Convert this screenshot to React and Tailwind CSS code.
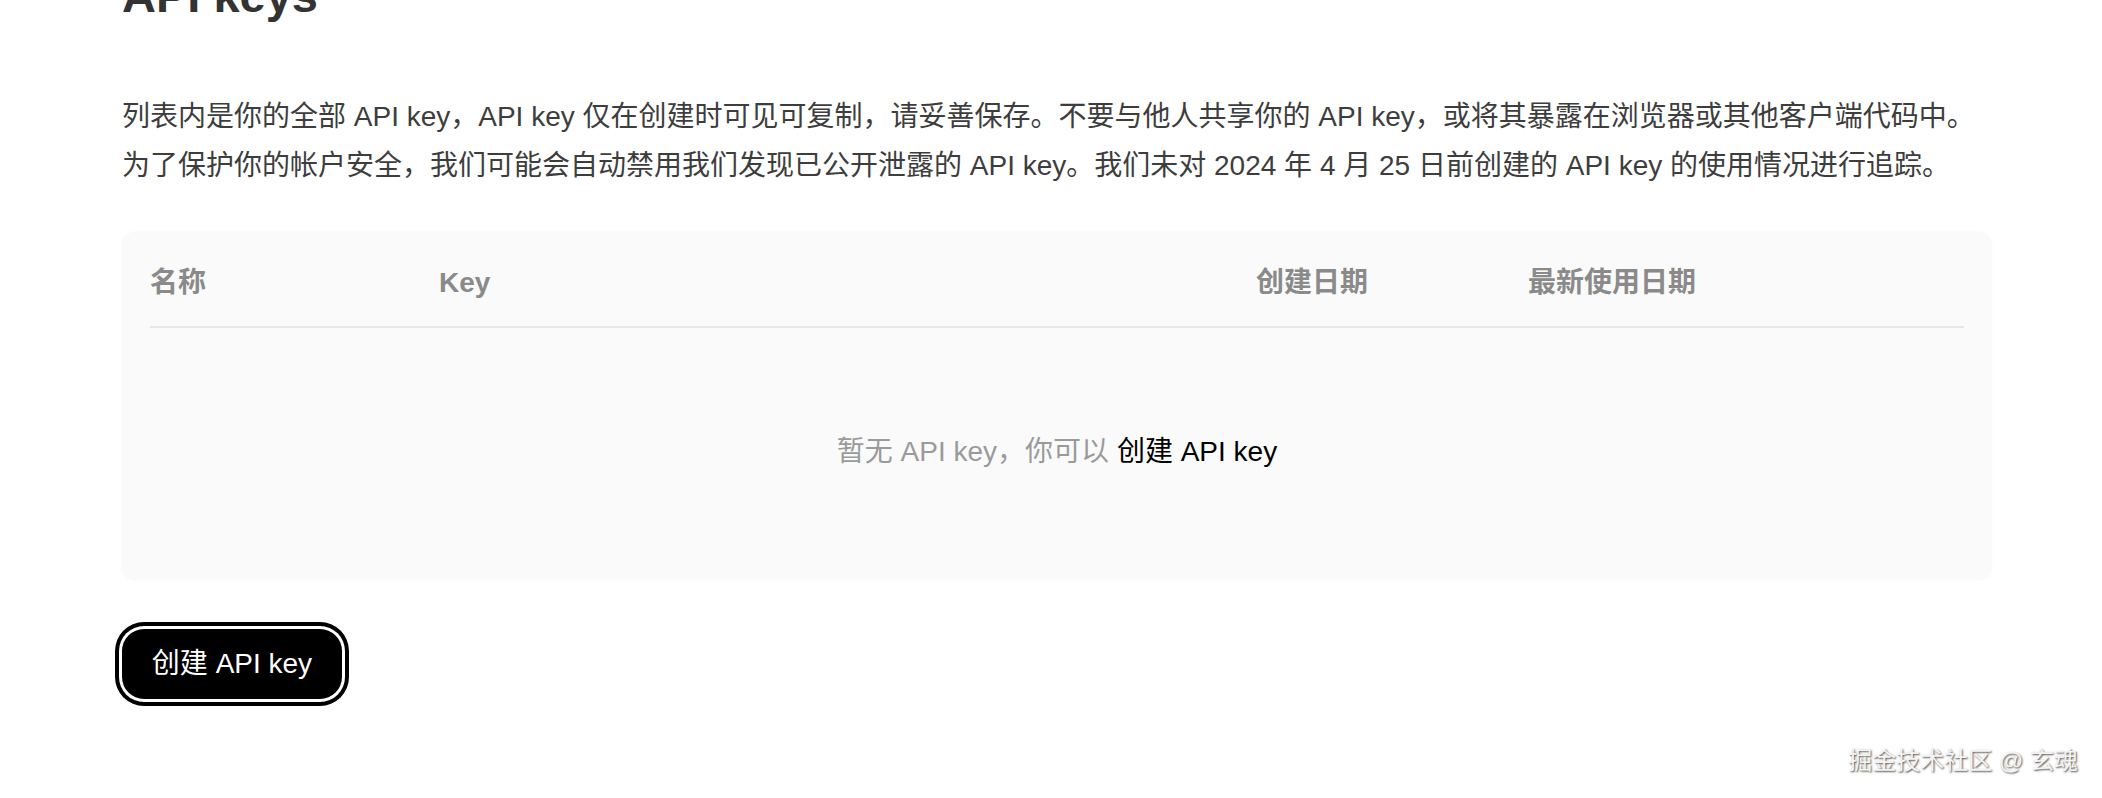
import React from "react";

const FONT = "font-['Liberation_Sans','Noto_Sans_CJK_SC',sans-serif]";

export default function App() {
  return (
    <div className={`relative h-[798px] w-full overflow-hidden bg-white ${FONT}`}>
      <div className="pl-[122px] pr-[110px]">
        <h1 className="mt-[-28px] text-[47px] leading-[47px] font-bold text-[#333333]">API keys</h1>

        <p className="mt-[73px] text-[28px] leading-[49px] text-[#3d3d3d] whitespace-nowrap">
          列表内是你的全部 API key，API key 仅在创建时可见可复制，请妥善保存。不要与他人共享你的 API key，或将其暴露在浏览器或其他客户端代码中。
          <br />
          为了保护你的帐户安全，我们可能会自动禁用我们发现已公开泄露的 API key。我们未对 2024 年 4 月 25 日前创建的 API key 的使用情况进行追踪。
        </p>

        <div className="mt-[42px] w-[1870px] rounded-[14px] bg-[#fafafa] px-[28px] shadow-[0_0_3px_rgba(0,0,0,0.04)]">
          <div className="grid grid-cols-[289px_817px_272px_1fr] pt-[31px] pb-[23px] text-[28px] leading-[40px] font-semibold text-[#8a8a8a]">
            <div>名称</div>
            <div>Key</div>
            <div>创建日期</div>
            <div>最新使用日期</div>
          </div>
          <div className="h-[2px] bg-[#e6e6e6]" />
          <div className="flex h-[252px] items-center justify-center pb-[4px] text-[28px] leading-[40px]">
            <span className="text-[#9a9a9a]">暂无 API key，你可以&nbsp;</span>
            <span className="text-black">创建 API key</span>
          </div>
        </div>

        <button className="mt-[49px] flex h-[70px] w-[220px] items-center justify-center rounded-[22px] bg-black text-[28px] leading-[40px] text-white ring-4 ring-black ring-offset-[3px] ring-offset-white">
          创建 API key
        </button>
      </div>

      <div className="absolute right-[24px] bottom-[23px] text-[24px] leading-[28px] text-[#f4f4f4] [text-shadow:1px_1px_2px_rgba(0,0,0,0.7)]">
        掘金技术社区 @ 玄魂
      </div>
    </div>
  );
}
